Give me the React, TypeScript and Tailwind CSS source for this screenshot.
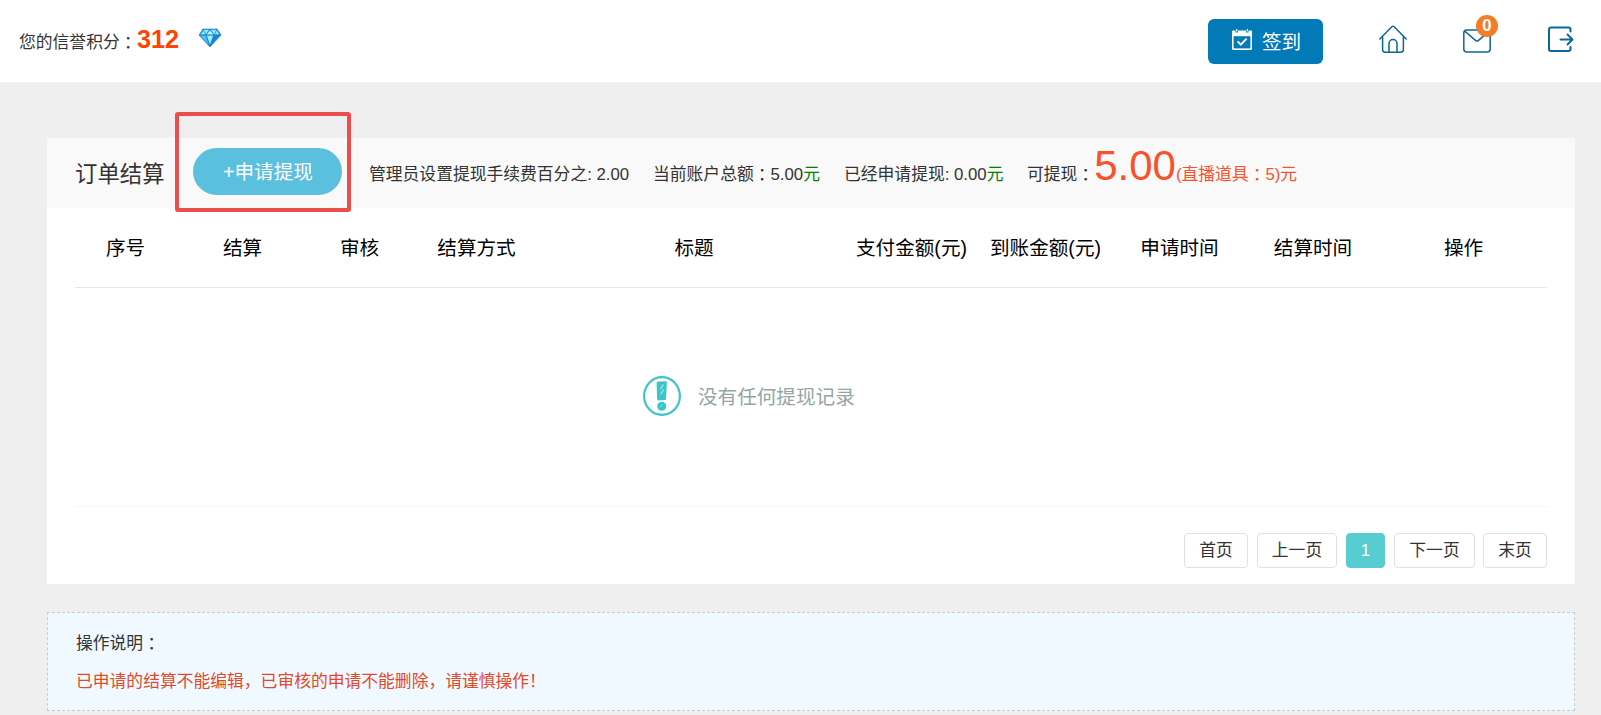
import React from "react";

const font = "font-['Liberation_Sans','Noto_Sans_CJK_SC',sans-serif]";

function Wide({ children }: { children: React.ReactNode }) {
  return <span className="inline-block translate-y-px font-['Noto_Sans_CJK_TC',sans-serif] leading-none">{children}</span>;
}

function Diamond() {
  return (
    <svg className="ml-[20px] mb-[3px] h-[19px] w-[22px]" viewBox="0 0 22 19">
      <path d="M4 1h14l4 6-11 12L0 7z" fill="#1b9be6" />
      <path d="M4 1h14l4 6H0z" fill="#2aa7e4" />
      <path d="M5 1.800h5L7 6.200 1.500 6.400zM12 1.800h5l3.400 4.400-5.600.2z" fill="#8fe3fb" />
      <path d="M7.200 6.500 11 2.600l3.800 3.900z" fill="#c9f4ff" />
      <path d="M1.600 7.600h5l3 8.600z" fill="#4fc6f5" />
      <path d="M7.800 7.600h6.400L11 17z" fill="#a4ecff" />
      <path d="M15.400 7.600h5l-8 8.600z" fill="#1483d8" />
      <path d="M4 1h14l4 6-11 12L0 7zM0 7h22M7 7l4 11 4-11M4 1l3 6 4-5.500 4 5.500 3-6" fill="none" stroke="#1277b8" strokeWidth=".6" />
    </svg>
  );
}

function TopBar() {
  return (
    <header className="flex h-[82px] items-center bg-white pl-[19px] pr-[27px]">
      <div className="flex h-full items-center pb-[5px]">
        <span className="mt-[9px] w-[118px] whitespace-nowrap text-[16.8px] leading-6 text-[#333]">
          您的信誉积分<Wide>：</Wide>
        </span>
        <strong className="mt-px text-[25.2px] font-bold leading-7 text-[#ff4400]">312</strong>
        <Diamond />
      </div>
      <div className="ml-auto flex items-center">
        <button className="flex h-[45px] w-[115px] items-center rounded-[6px] bg-[#027ab8] pl-6 text-[19.6px] text-white">
          <svg className="mb-[4px] mr-[10px] h-[21px] w-5" viewBox="0 0 20 21">
            <path d="M0 2.500Q0 1.500 1 1.500h2.500v2h2.400v-2h8.200v2h2.400v-2H19q1 0 1 1v17q0 1.500-1.500 1.500h-17Q0 21 0 19.500z" fill="#fff" />
            <path d="M1.600 7.200h16.800v12.200H1.600z" fill="#027ab8" />
            <path d="M4.700 0v2.600M15.300 0v2.600" stroke="#fff" strokeWidth="1.100" />
            <path d="m5.600 12.400 3.200 3.200 5.800-6" fill="none" stroke="#fff" strokeWidth="1.900" />
          </svg>
          <span className="mt-[3px] whitespace-nowrap">签到</span>
        </button>
        <svg className="mb-[5px] ml-14 h-[28px] w-[28px]" viewBox="0 0 28 28" fill="none" stroke="#0d6698" strokeWidth="1.500" strokeLinecap="round" strokeLinejoin="round">
          <path d="M.8 14 12.800 1.800q1.200-1.100 2.400 0L27.200 14" />
          <path d="M3.600 12v12.500q0 2.700 2.700 2.700h15.400q2.700 0 2.700-2.700V12" />
          <path d="M10 27v-8.200a4 4.200 0 0 1 8 0V27" />
        </svg>
        <div className="relative mb-px ml-[56px] h-[24px] w-[28px]">
          <svg className="h-[24px] w-[28px]" viewBox="0 0 28 24" fill="none" stroke="#0d6698" strokeWidth="1.500" strokeLinejoin="round">
            <rect x=".8" y="1" width="26.400" height="22" rx="3" />
            <path d="m1.600 2 11.200 9.600q1.200 1 2.400 0L26.400 2" />
          </svg>
          <span className="absolute -top-[14px] left-[13px] flex h-[22px] w-[22px] items-center justify-center rounded-full bg-[#f57c28] pt-px text-[16.8px] font-bold leading-none text-white">
            0
          </span>
        </div>
        <svg className="mb-[4px] ml-[57px] h-[26px] w-[26px]" viewBox="0 0 26 26" fill="none" stroke="#0d6698" strokeWidth="2" strokeLinecap="round" strokeLinejoin="round">
          <path d="M22.500 5.500V3.500q0-2-2-2H3q-2 0-2 2V23q0 2 2 2h17.500q2 0 2-2v-2" />
          <path d="M12.500 13.500h12M19.500 8.500l5 5-5 5" strokeWidth="1.900" />
        </svg>
      </div>
    </header>
  );
}

const columns = [
  { label: "序号", cls: "w-[109px] pr-2" },
  { label: "结算", cls: "w-[117px]" },
  { label: "审核", cls: "w-[117px]" },
  { label: "结算方式", cls: "w-[117px]" },
  { label: "标题", cls: "w-[318px]" },
  { label: "支付金额(元)", cls: "w-[117px]" },
  { label: "到账金额(元)", cls: "w-[151px]" },
  { label: "申请时间", cls: "w-[117px]" },
  { label: "结算时间", cls: "w-[150px]" },
  { label: "操作", cls: "w-[159px] pr-2" },
];

function TitleBar() {
  return (
    <div className="flex h-[70px] items-start bg-[#f9f9f9] pl-7">
      <h1 className="mt-[19px] w-[118px] text-[22.4px] leading-9 text-[#333]">订单结算</h1>
      <div className="relative mt-[10px]">
        <button className="h-[47px] w-[149px] rounded-full bg-[#5bc0de] pl-px pt-[3px] text-[19.6px] text-white">+申请提现</button>
        <div className="absolute -left-[18px] -top-[36px] h-[100px] w-[176px] rounded-[3px] border-4 border-[#ec4d4d]" />
      </div>
      <div className="ml-[27px] mt-px flex h-[54px] items-baseline whitespace-nowrap text-[16.8px] leading-[54px] text-[#333]">
        <span className="w-[284px]">管理员设置提现手续费百分之: 2.00</span>
        <span className="w-[191px]">
          当前账户总额<Wide>：</Wide>5.00<span className="text-[#008000]">元</span>
        </span>
        <span className="w-[183px]">
          已经申请提现: 0.00<span className="text-[#008000]">元</span>
        </span>
        <span>
          可提现<Wide>：</Wide>
        </span>
        <span className="text-[#f9512a]">
          <span className="text-[42px]">5.00</span>(直播道具<Wide>：</Wide>5)元
        </span>
      </div>
    </div>
  );
}

const pages = [
  { label: "首页", cls: "w-16 border-[#dce1e1] text-[#333]" },
  { label: "上一页", cls: "ml-[9px] w-20 border-[#dce1e1] text-[#333]" },
  { label: "1", cls: "ml-[9px] w-[39px] border-[#58cdd1] bg-[#58cdd1] text-white" },
  { label: "下一页", cls: "ml-[9px] w-[81px] border-[#dce1e1] text-[#333]" },
  { label: "末页", cls: "ml-2 w-16 border-[#dce1e1] text-[#333]" },
];

function EmptyState() {
  return (
    <div className="flex h-[219px] items-center border-b border-[#f4f4fb] pl-[568px]">
      <svg className="mb-[2px] h-[40px] w-[38px]" viewBox="0 0 38 40" fill="none">
        <ellipse cx="19" cy="20" rx="17.900" ry="18.900" stroke="#3cc4cb" strokeWidth="2.200" />
        <path d="m15 5.500 7.600-.3q1.300 0 1.300 1.300L23 22.700q0 1.300-1.200 1.400l-6.300.5q-1.400 0-1.400-1.300l-.5-16.300q0-1.400 1.400-1.500z" fill="#3cc4cb" />
        <path d="m17.500 13 3-4.500M17.500 18.500l3.300-5" stroke="#8edfe2" strokeWidth="1.500" />
        <circle cx="18.700" cy="30.300" r="4.500" fill="#3cc4cb" />
        <path d="m17 31 2.500-2" stroke="#8edfe2" />
      </svg>
      <span className="ml-[17px] mt-[2px] text-[19.6px] text-[#95a5a6]">没有任何提现记录</span>
    </div>
  );
}

export default function App() {
  return (
    <div className={`h-[715px] w-full overflow-hidden bg-[#efefef] font-normal ${font}`}>
      <TopBar />
      <main className="pl-[47px] pr-[26px] pt-14">
        <section className="h-[446px] bg-white">
          <TitleBar />
          <div className="mx-7">
            <div className="flex h-20 items-center border-b border-[#e6e8e8] pt-[2px] text-[19.6px] text-black">
              {columns.map((c) => (
                <div key={c.label} className={`shrink-0 whitespace-nowrap text-center ${c.cls}`}>
                  {c.label}
                </div>
              ))}
            </div>
            <EmptyState />
            <nav className="mt-[26px] flex justify-end">
              {pages.map((p) => (
                <button key={p.label} className={`flex h-[35px] items-center justify-center whitespace-nowrap rounded-[4px] border text-[16.8px] ${p.cls}`}>
                  {p.label}
                </button>
              ))}
            </nav>
          </div>
        </section>
        <section className="mt-7 h-[99px] border border-dashed border-[#c6ccce] bg-[#f0f9ff] pl-7 pt-3 text-[16.8px] leading-[38px]">
          <p className="h-[38px] text-[#333]">
            操作说明<Wide>：</Wide>
          </p>
          <p className="h-[38px] text-[#e04a2a]">
            已申请的结算不能编辑，已审核的申请不能删除，请谨慎操作！
          </p>
        </section>
      </main>
    </div>
  );
}
